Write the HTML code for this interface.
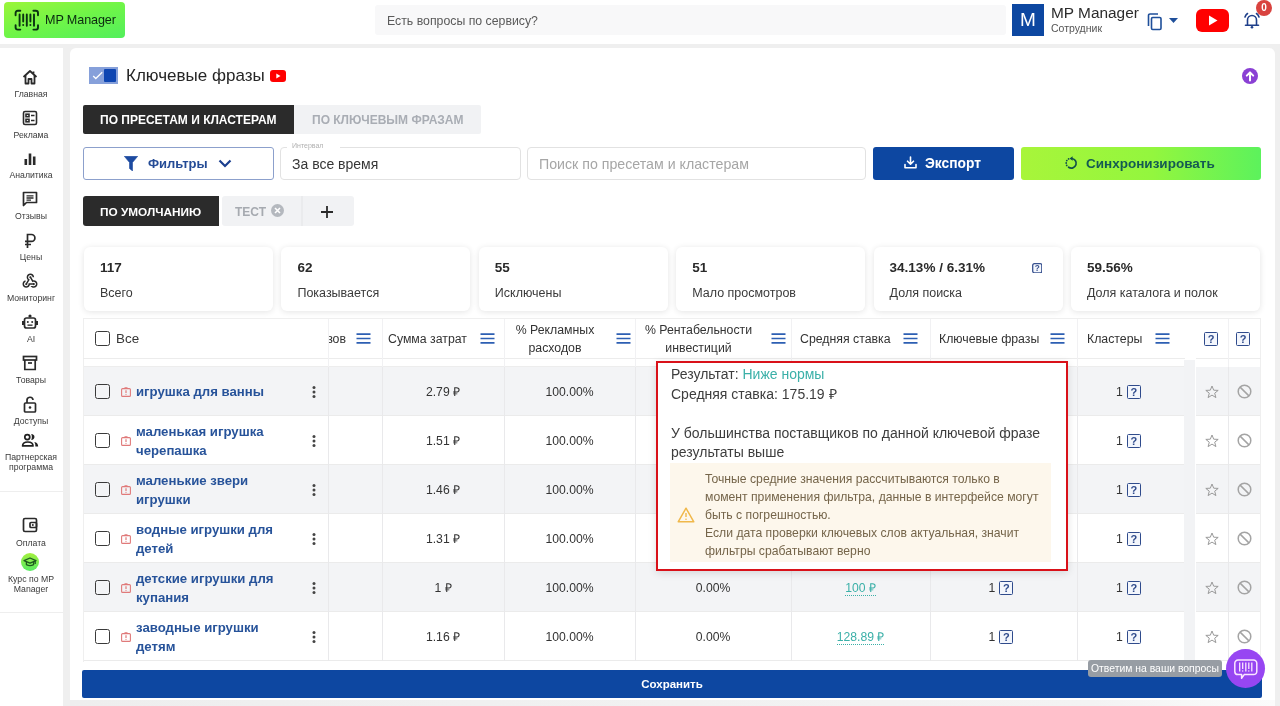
<!DOCTYPE html>
<html><head><meta charset="utf-8">
<style>
*{box-sizing:border-box;margin:0;padding:0}
html,body{width:1280px;height:706px;overflow:hidden;-webkit-font-smoothing:antialiased;background:#efefef;font-family:"Liberation Sans",sans-serif;color:#2c2c2c}
.a{position:absolute}
.hdr{left:0;top:0;width:1280px;height:44px;background:#fff}
.logo{left:4px;top:2px;width:121px;height:36px;border-radius:4px;background:linear-gradient(165deg,#9cf53a 0%,#6ff548 50%,#52ef5c 100%);}
.side{left:0;top:48px;width:63px;height:658px;background:#fff}
.card{left:70px;top:48px;width:1205px;height:670px;background:#fff;border-radius:6px}
.lbl{font-size:8.7px;color:#3a3a3a;text-align:center;width:62px;left:0;line-height:10px}
.ico{left:22px;width:16px;height:16px}
.ico svg{display:block}
.cb{width:15px;height:15px;border:1.8px solid #3a3a3a;border-radius:2.5px}
.lnk{font-size:13.2px;font-weight:700;color:#27539a;line-height:19px;white-space:nowrap}
.ctr{text-align:center;font-size:12.2px;color:#333;line-height:16px}
.hd{font-size:12.3px;color:#333;line-height:16px;white-space:nowrap}
.q{display:inline-flex;align-items:center;justify-content:center;width:14px;height:14px;border:1.9px solid #2f4b8c;background:#f3f6fc;color:#2f4b8c;font-size:11px;font-weight:700;line-height:10px;border-radius:1.5px;margin-left:4px;vertical-align:middle}
.ctr .q{position:relative;top:0px}
.ctr.g{padding-right:5px}
.tl{color:#3bb0a8;border-bottom:1px dotted #3bb0a8}
</style></head><body><div style="position:absolute;left:0;top:0;width:1280px;height:706px;will-change:transform">
<!-- header -->
<div class="a hdr"></div>
<div class="a logo"></div>
<svg class="a" style="left:14px;top:9px" width="26" height="23" viewBox="0 0 26 23">
 <g fill="none" stroke="#0a3312" stroke-width="1.9" stroke-linecap="round">
  <path d="M6.3 1.8H3.8Q1.6 1.8 1.6 4V6.2"/><path d="M6.3 20.6H3.8Q1.6 20.6 1.6 18.4V16.2"/>
  <path d="M19.4 1.8H21.8Q24 1.8 24 4V6.2"/><path d="M19.4 20.6H21.8Q24 20.6 24 18.4V16.2"/>
  <path d="M5.6 5.4V16.8M12.8 5.4V16.8M20 5.4V16.8M9.2 5.4V12.6M16.4 5.4V12.6"/>
 </g>
 <g fill="#0a3312"><circle cx="9.2" cy="15.9" r="1"/><circle cx="16.4" cy="15.9" r="1"/></g>
</svg>
<div class="a" style="left:45px;top:13px;font-size:12.6px;color:#0b2a10;letter-spacing:-0.1px">MP Manager</div>

<div class="a" style="left:375px;top:5px;width:631px;height:30px;background:#f8f8f9;border-radius:3px"></div>
<div class="a" style="left:387px;top:14px;font-size:12.3px;color:#5a5a5a">Есть вопросы по сервису?</div>

<div class="a" style="left:1012px;top:4px;width:32px;height:32px;background:#0d47a1;color:#fff;font-size:19px;text-align:center;line-height:32px">M</div>
<div class="a" style="left:1051px;top:4px;font-size:15.4px;color:#2c2c2c">MP Manager</div>
<div class="a" style="left:1051px;top:22px;font-size:10.5px;color:#555">Сотрудник</div>
<svg class="a" style="left:1147px;top:13px" width="16" height="18" viewBox="0 0 16 18"><g fill="none" stroke="#1f4f9a" stroke-width="1.6"><path d="M1.5 13V2.5A1.5 1.5 0 0 1 3 1H11"/><rect x="4.5" y="4.5" width="9.5" height="12" rx="1.2"/></g></svg>
<svg class="a" style="left:1169px;top:18px" width="9" height="5" viewBox="0 0 9 5"><path d="M0 0H9L4.5 5Z" fill="#1f4f9a"/></svg>
<svg class="a" style="left:1196px;top:9px" width="33" height="23" viewBox="0 0 33 23"><rect width="33" height="23" rx="6" fill="#f00"/><path d="M13 6.5V16.5L21.5 11.5Z" fill="#fff"/></svg>
<svg class="a" style="left:1243px;top:11px" width="18" height="18" viewBox="0 0 18 18"><g fill="none" stroke="#1f3f8a" stroke-width="1.6" stroke-linecap="round"><path d="M4.5 14V9A4.5 4.5 0 0 1 13.5 9V14"/><path d="M2.5 14.2H15.5"/><path d="M2 6A7 7 0 0 1 4.5 2.5M16 6A7 7 0 0 0 13.5 2.5"/></g><circle cx="9" cy="16.2" r="1.3" fill="#1f3f8a"/></svg>
<div class="a" style="left:1256px;top:0px;width:16px;height:16px;border-radius:50%;background:#d9433f;color:#fff;font-size:10px;font-weight:700;text-align:center;line-height:15px">0</div>

<!-- sidebar -->
<div class="a side"></div>
<div class="a" style="left:0;top:491px;width:63px;height:1px;background:#eee"></div>
<div class="a" style="left:0;top:612px;width:63px;height:1px;background:#eee"></div>
<!-- home -->
<svg class="a" style="left:22px;top:69px" width="16" height="16" viewBox="0 0 16 16"><g fill="none" stroke="#2a2a2a" stroke-width="1.8" stroke-linejoin="round"><path d="M1.5 8L8 2L14.5 8"/><path d="M3.5 6.5V14.5H6.5V10H9.5V14.5H12.5V6.5"/><path d="M11.5 2.5V4.5"/></g></svg>
<div class="a lbl" style="top:89px">Главная</div>
<!-- reklama -->
<svg class="a" style="left:22px;top:110px" width="16" height="16" viewBox="0 0 16 16"><g fill="none" stroke="#2a2a2a" stroke-width="1.6"><rect x="1.5" y="1.5" width="13" height="13" rx="1.5"/><rect x="4" y="4.2" width="3" height="2.5"/><rect x="4" y="9.3" width="3" height="2.5"/></g><path d="M9 5.5H12.5M9 10.5H12.5" stroke="#2a2a2a" stroke-width="1.5"/></svg>
<div class="a lbl" style="top:130px">Реклама</div>
<!-- analytics -->
<svg class="a" style="left:22px;top:151px" width="16" height="16" viewBox="0 0 16 16"><g fill="#2a2a2a"><rect x="2.5" y="8" width="2.6" height="6"/><rect x="6.7" y="2.5" width="2.6" height="11.5"/><rect x="10.9" y="5.5" width="2.6" height="8.5"/></g></svg>
<div class="a lbl" style="top:170px">Аналитика</div>
<!-- reviews -->
<svg class="a" style="left:22px;top:191px" width="16" height="17" viewBox="0 0 16 17"><g fill="none" stroke="#2a2a2a" stroke-width="1.7" stroke-linejoin="round"><path d="M1.5 1.5H14.5V11.5H4.5L1.5 14.5Z"/></g><path d="M4.5 4.8H11.5M4.5 7H11.5M4.5 9.2H9" stroke="#2a2a2a" stroke-width="1.3"/></svg>
<div class="a lbl" style="top:211px">Отзывы</div>
<!-- prices -->
<svg class="a" style="left:22px;top:233px" width="16" height="16" viewBox="0 0 16 16"><g fill="none" stroke="#2a2a2a" stroke-width="1.7"><path d="M5.5 15V1.5H9.5A3.3 3.3 0 0 1 9.5 8.3H3M3 11.5H9"/></g></svg>
<div class="a lbl" style="top:252px">Цены</div>
<!-- monitoring -->
<svg class="a" style="left:21px;top:272px" width="18" height="18" viewBox="0 0 24 24"><path fill="#2a2a2a" d="M10 15h5.88c.27-.31.67-.5 1.12-.5.83 0 1.5.67 1.5 1.5s-.67 1.5-1.5 1.5c-.44 0-.84-.19-1.12-.5H11.9c-.46 2.28-2.48 4-4.9 4-2.76 0-5-2.24-5-5 0-2.42 1.72-4.44 4-4.9v2.07c-1.16.41-2 1.53-2 2.83 0 1.650 1.35 3 3 3s3-1.35 3-3v-1zm2.5-11c1.65 0 3 1.35 3 3h2c0-2.76-2.24-5-5-5s-5 2.24-5 5c0 1.43.6 2.71 1.55 3.62l-2.350 3.9c-.68.14-1.2.75-1.2 1.48 0 .83.67 1.5 1.5 1.5s1.5-.67 1.5-1.5c0-.16-.02-.31-.07-.45l3.38-5.63C10.49 9.61 9.5 8.42 9.5 7c0-1.65 1.35-3 3-3zm4.5 9c-.64 0-1.23.2-1.72.54l-3.05-5.07C11.53 8.350 11 7.74 11 7c0-.83.67-1.5 1.5-1.5S14 6.17 14 7c0 .15-.02.29-.06.43l2.19 3.65c.28-.05.57-.08.87-.08 2.76 0 5 2.24 5 5s-2.24 5-5 5c-1.85 0-3.47-1.01-4.33-2.5h2.67c.48.32 1.05.5 1.66.5 1.65 0 3-1.35 3-3s-1.35-3-3-3z"/></svg>
<div class="a lbl" style="top:293px">Мониторинг</div>
<!-- AI -->
<svg class="a" style="left:22px;top:314px" width="16" height="16" viewBox="0 0 16 16"><g fill="none" stroke="#2a2a2a" stroke-width="1.7"><rect x="2.5" y="4" width="11" height="10" rx="2"/></g><g fill="#2a2a2a"><circle cx="8" cy="2" r="1.6"/><rect x="0" y="7" width="2" height="4"/><rect x="14" y="7" width="2" height="4"/><circle cx="5.8" cy="8" r="1"/><circle cx="10.2" cy="8" r="1"/><rect x="5.5" y="10.5" width="5" height="1.3"/></g></svg>
<div class="a lbl" style="top:334px">AI</div>
<!-- goods -->
<svg class="a" style="left:22px;top:355px" width="16" height="16" viewBox="0 0 16 16"><g fill="none" stroke="#2a2a2a" stroke-width="1.7"><rect x="1.5" y="1.5" width="13" height="3.5"/><path d="M2.8 5V14.5H13.2V5"/><path d="M6 8H10"/></g></svg>
<div class="a lbl" style="top:375px">Товары</div>
<!-- access -->
<svg class="a" style="left:22px;top:396px" width="16" height="17" viewBox="0 0 16 17"><g fill="none" stroke="#2a2a2a" stroke-width="1.7"><rect x="2.5" y="7" width="11" height="9" rx="1"/><path d="M5 7V4.5A3 3 0 0 1 11 4"/></g><circle cx="8" cy="11.5" r="1.3" fill="#2a2a2a"/></svg>
<div class="a lbl" style="top:416px">Доступы</div>
<!-- partner -->
<svg class="a" style="left:15px;top:425px" width="30" height="30" viewBox="0 0 30 30"><circle cx="12.3" cy="12.1" r="2.5" fill="none" stroke="#222" stroke-width="1.7"/><path d="M16.2 9.1C20.6 9.1 20.6 15 16.2 15C17.1 13 17.1 11.1 16.2 9.1Z" fill="#222"/><path d="M7.6 20.9Q7.6 17 12.8 17Q18 17 18 20.9Z" fill="none" stroke="#222" stroke-width="1.7" stroke-linejoin="round"/><path d="M19.3 16.9Q23.2 17.6 23.2 21.6H20.4Q20.6 18.6 19.3 16.9Z" fill="#222"/></svg>
<div class="a lbl" style="top:452px">Партнерская<br>программа</div>
<!-- payment -->
<svg class="a" style="left:22px;top:517px" width="16" height="16" viewBox="0 0 16 16"><g fill="none" stroke="#2a2a2a" stroke-width="1.7"><rect x="1.5" y="1.5" width="13" height="13" rx="1.5"/><rect x="8" y="5.5" width="6.5" height="5" rx="1"/></g><circle cx="10.8" cy="8" r="1" fill="#2a2a2a"/></svg>
<div class="a lbl" style="top:538px">Оплата</div>
<!-- course -->
<div class="a" style="left:21px;top:553px;width:18px;height:18px;border-radius:50%;background:linear-gradient(180deg,#a4ef3e,#58ec64)"></div>
<svg class="a" style="left:23px;top:557px" width="14" height="10" viewBox="0 0 14 10"><g fill="none" stroke="#1d5a1f" stroke-width="1.3" stroke-linejoin="round"><path d="M1 3.6L7 1L13 3.6L7 6.2Z"/><path d="M3.4 4.8V7.6Q7 9.6 10.6 7.6V4.8"/><path d="M12.2 3.9V7"/></g></svg>
<div class="a lbl" style="top:574px">Курс по MP<br>Manager</div>

<!-- main card -->
<div class="a card"></div>
<!-- title -->
<div class="a" style="left:89px;top:67px;width:29px;height:16.5px;background:#86a0da"></div>
<div class="a" style="left:103.5px;top:69px;width:12.5px;height:12.5px;background:#0f46b2;border-radius:1px"></div>
<svg class="a" style="left:92px;top:71px" width="11" height="9" viewBox="0 0 11 9"><path d="M1.2 5L3.8 7.5L10.2 1.2" fill="none" stroke="#fff" stroke-width="1.3"/></svg>
<div class="a" style="left:126px;top:66px;font-size:17px;color:#262626">Ключевые фразы</div>
<svg class="a" style="left:270px;top:70px" width="16" height="12" viewBox="0 0 16 12"><rect width="16" height="12" rx="3" fill="#f00"/><path d="M6.3 3.5V8.5L10.5 6Z" fill="#fff"/></svg>
<svg class="a" style="left:1242px;top:68px" width="16" height="16" viewBox="0 0 16 16"><circle cx="8" cy="8" r="8" fill="#8a40d4"/><path d="M8 12.5V4.5M4.8 7.6L8 4.4L11.2 7.6" fill="none" stroke="#fff" stroke-width="2" stroke-linecap="round" stroke-linejoin="round"/></svg>
<!-- mode tabs -->
<div class="a" style="left:83px;top:105px;width:211px;height:29px;background:#2b2b2b;border-radius:2px 0 0 2px"></div>
<div class="a" style="left:294px;top:105px;width:187px;height:29px;background:#f1f2f4;border-radius:0 2px 2px 0"></div>
<div class="a" style="left:100px;top:113px;font-size:12px;font-weight:700;color:#fff">ПО ПРЕСЕТАМ И КЛАСТЕРАМ</div>
<div class="a" style="left:312px;top:113px;font-size:12px;font-weight:700;color:#a9adb4">ПО КЛЮЧЕВЫМ ФРАЗАМ</div>
<!-- filter row -->
<div class="a" style="left:83px;top:147px;width:191px;height:33px;border:1px solid #8ca0cc;border-radius:3px"></div>
<svg class="a" style="left:124px;top:156px" width="14" height="15" viewBox="0 0 14 15"><path d="M0.3 0.3H13.7L8.5 6.5V15L5.5 12.5V6.5Z" fill="#1c4aa0" stroke="#1c4aa0" stroke-width="0.6" stroke-linejoin="round"/></svg>
<div class="a" style="left:148px;top:156px;font-size:13px;font-weight:700;color:#244b96">Фильтры</div>
<svg class="a" style="left:218px;top:159px" width="14" height="9" viewBox="0 0 14 9"><path d="M1.5 1.5L7 7L12.5 1.5" fill="none" stroke="#1a3f8f" stroke-width="2.2"/></svg>
<div class="a" style="left:280px;top:147px;width:241px;height:33px;border:1px solid #e2e2e2;border-radius:4px"></div>
<div class="a" style="left:287px;top:141px;padding:0 17px 0 5px;background:#fff;font-size:7px;color:#b0b0b0;line-height:9px">Интервал</div>
<div class="a" style="left:292px;top:156px;font-size:14px;color:#363636">За все время</div>
<div class="a" style="left:527px;top:147px;width:339px;height:33px;border:1px solid #e2e2e2;border-radius:4px"></div>
<div class="a" style="left:539px;top:156px;font-size:14.2px;color:#a6a6a6">Поиск по пресетам и кластерам</div>
<div class="a" style="left:873px;top:147px;width:141px;height:33px;background:#0d47a1;border-radius:3px"></div>
<svg class="a" style="left:904px;top:156px" width="13" height="13" viewBox="0 0 13 13"><g fill="none" stroke="#fff" stroke-width="1.6" stroke-linecap="round" stroke-linejoin="round"><path d="M6.5 1V8M3.5 5.2L6.5 8.2L9.5 5.2"/><path d="M1 8.5V11.8H12V8.5"/></g></svg>
<div class="a" style="left:925px;top:156px;font-size:13.8px;font-weight:700;color:#fff">Экспорт</div>
<div class="a" style="left:1021px;top:147px;width:240px;height:33px;background:linear-gradient(90deg,#a8f53a 0%,#93f63e 55%,#5cf25c 100%);border-radius:3px"></div>
<svg class="a" style="left:1064px;top:156px" width="14" height="14" viewBox="0 0 14 14"><path d="M7.5 2.5A4.8 4.8 0 1 1 4.6 11.2" fill="none" stroke="#11504a" stroke-width="1.7" stroke-linecap="round"/><g fill="#11504a"><circle cx="2.7" cy="9.4" r="0.9"/><circle cx="2.2" cy="7" r="0.9"/><circle cx="2.8" cy="4.6" r="0.9"/><circle cx="4.6" cy="2.9" r="0.9"/></g><path d="M8.6 0.2L5.6 2.5L8.6 4.8Z" fill="#11504a"/></svg>
<div class="a" style="left:1086px;top:156px;font-size:13.5px;font-weight:700;color:#145a52">Синхронизировать</div>
<!-- preset tabs -->
<div class="a" style="left:83px;top:196px;width:136px;height:30px;background:#2b2b2b;border-radius:3px 0 0 3px"></div>
<div class="a" style="left:222px;top:196px;width:79px;height:30px;background:#f1f2f4;border-radius:3px 0 0 3px"></div>
<div class="a" style="left:301px;top:196px;width:2px;height:30px;background:#eaebed"></div>
<div class="a" style="left:303px;top:196px;width:51px;height:30px;background:#f1f2f4;border-radius:0 3px 3px 0"></div>
<div class="a" style="left:100px;top:205px;font-size:11.8px;font-weight:700;color:#fff">ПО УМОЛЧАНИЮ</div>
<div class="a" style="left:235px;top:205px;font-size:12px;font-weight:700;color:#a6aab0">ТЕСТ</div>
<svg class="a" style="left:271px;top:204px" width="13" height="13" viewBox="0 0 13 13"><circle cx="6.5" cy="6.5" r="6.5" fill="#b4b8be"/><path d="M4 4L9 9M9 4L4 9" stroke="#fff" stroke-width="1.6"/></svg>
<svg class="a" style="left:321px;top:205.5px" width="12" height="12" viewBox="0 0 12 12"><path d="M6 0V12M0 6H12" stroke="#2a2a2a" stroke-width="1.8"/></svg>
<!-- stat cards -->
<div class="a" style="left:84.0px;top:247px;width:189px;height:64px;background:#fff;border-radius:6px;box-shadow:0 1px 6px rgba(0,0,0,0.11)"></div>
<div class="a" style="left:100.0px;top:260px;font-size:13.5px;font-weight:700;color:#2a2a2a">117</div>
<div class="a" style="left:100.0px;top:286px;font-size:12.5px;color:#3a3a3a">Всего</div>
<div class="a" style="left:281.4px;top:247px;width:189px;height:64px;background:#fff;border-radius:6px;box-shadow:0 1px 6px rgba(0,0,0,0.11)"></div>
<div class="a" style="left:297.4px;top:260px;font-size:13.5px;font-weight:700;color:#2a2a2a">62</div>
<div class="a" style="left:297.4px;top:286px;font-size:12.5px;color:#3a3a3a">Показывается</div>
<div class="a" style="left:478.8px;top:247px;width:189px;height:64px;background:#fff;border-radius:6px;box-shadow:0 1px 6px rgba(0,0,0,0.11)"></div>
<div class="a" style="left:494.8px;top:260px;font-size:13.5px;font-weight:700;color:#2a2a2a">55</div>
<div class="a" style="left:494.8px;top:286px;font-size:12.5px;color:#3a3a3a">Исключены</div>
<div class="a" style="left:676.2px;top:247px;width:189px;height:64px;background:#fff;border-radius:6px;box-shadow:0 1px 6px rgba(0,0,0,0.11)"></div>
<div class="a" style="left:692.2px;top:260px;font-size:13.5px;font-weight:700;color:#2a2a2a">51</div>
<div class="a" style="left:692.2px;top:286px;font-size:12.5px;color:#3a3a3a">Мало просмотров</div>
<div class="a" style="left:873.6px;top:247px;width:189px;height:64px;background:#fff;border-radius:6px;box-shadow:0 1px 6px rgba(0,0,0,0.11)"></div>
<div class="a" style="left:889.6px;top:260px;font-size:13.5px;font-weight:700;color:#2a2a2a">34.13% / 6.31%</div>
<div class="a" style="left:889.6px;top:286px;font-size:12.5px;color:#3a3a3a">Доля поиска</div>
<div class="a" style="left:1071.0px;top:247px;width:189px;height:64px;background:#fff;border-radius:6px;box-shadow:0 1px 6px rgba(0,0,0,0.11)"></div>
<div class="a" style="left:1087.0px;top:260px;font-size:13.5px;font-weight:700;color:#2a2a2a">59.56%</div>
<div class="a" style="left:1087.0px;top:286px;font-size:12.5px;color:#3a3a3a">Доля каталога и полок</div>
<svg class="a" style="left:1031.5px;top:262.5px" width="10.5" height="10.5" viewBox="0 0 10.5 10.5"><rect x="0.7" y="0.7" width="9.1" height="9.1" rx="1.6" fill="#f4f7fd" stroke="#3a5390" stroke-width="1.3"/><text x="5.25" y="8.4" font-size="8.2" font-weight="700" text-anchor="middle" fill="#3a5390" font-family="Liberation Sans">?</text></svg>

<!-- table -->
<div class="a" style="left:83px;top:318px;width:1178px;height:344px;background:#fff;border:1px solid #efefef;border-bottom:none"></div>
<div class="a" style="left:83px;top:358px;width:1102px;height:1px;background:#ececec"></div>
<div class="a" style="left:1196px;top:358px;width:65px;height:1px;background:#ececec"></div>
<div class="a" style="left:84px;top:367px;width:1101px;height:49px;background:#f3f4f6;border-bottom:1px solid #ebebeb"></div>
<div class="a" style="left:1196px;top:367px;width:64px;height:49px;background:#f3f4f6;border-bottom:1px solid #ebebeb"></div>
<div class="a cb" style="left:95px;top:384.0px"></div>
<svg class="a" style="left:121px;top:386.5px" width="10" height="10" viewBox="0 0 10 10"><rect x="0.6" y="1.6" width="8.8" height="7.8" rx="1" fill="none" stroke="#e07a7a" stroke-width="1.1"/><path d="M3.5 0.8H6.5" stroke="#e07a7a" stroke-width="1.1"/><path d="M5 3.3V5.9" stroke="#e07a7a" stroke-width="1.2"/><circle cx="5" cy="7.3" r="0.6" fill="#e07a7a"/></svg>
<div class="a lnk" style="left:136px;top:382.0px">игрушка для ванны</div>
<svg class="a" style="left:312px;top:385.5px" width="4" height="12" viewBox="0 0 4 12"><g fill="#444"><circle cx="2" cy="1.6" r="1.5"/><circle cx="2" cy="6" r="1.5"/><circle cx="2" cy="10.4" r="1.5"/></g></svg>
<div class="a" style="left:328px;top:367px;width:1px;height:49px;background:#e9e9eb"></div>
<div class="a" style="left:382px;top:367px;width:1px;height:49px;background:#e9e9eb"></div>
<div class="a" style="left:504px;top:367px;width:1px;height:49px;background:#e9e9eb"></div>
<div class="a" style="left:635px;top:367px;width:1px;height:49px;background:#e9e9eb"></div>
<div class="a" style="left:791px;top:367px;width:1px;height:49px;background:#e9e9eb"></div>
<div class="a" style="left:930px;top:367px;width:1px;height:49px;background:#e9e9eb"></div>
<div class="a" style="left:1077px;top:367px;width:1px;height:49px;background:#e9e9eb"></div>
<div class="a" style="left:1228px;top:367px;width:1px;height:49px;background:#e9e9eb"></div>
<div class="a ctr" style="left:382px;width:122px;top:383.5px">2.79 ₽</div>
<div class="a ctr" style="left:504px;width:131px;top:383.5px">100.00%</div>
<div class="a ctr g" style="left:1077px;width:108px;top:383.5px">1<span class="q">?</span></div>
<svg class="a" style="left:1205px;top:384.5px" width="14" height="14" viewBox="0 0 14 14"><path d="M7 1L8.7 5.2L13.2 5.4L9.7 8.2L10.9 12.6L7 10.1L3.1 12.6L4.3 8.2L0.8 5.4L5.3 5.2Z" fill="none" stroke="#9a9a9a" stroke-width="1"/></svg>
<svg class="a" style="left:1237px;top:384.0px" width="15" height="15" viewBox="0 0 15 15"><circle cx="7.5" cy="7.5" r="6.3" fill="none" stroke="#a4a4a4" stroke-width="1.5"/><path d="M3.1 3.1L11.9 11.9" stroke="#a4a4a4" stroke-width="1.5"/></svg>
<div class="a" style="left:84px;top:416px;width:1101px;height:49px;background:#fff;border-bottom:1px solid #ebebeb"></div>
<div class="a" style="left:1196px;top:416px;width:64px;height:49px;background:#fff;border-bottom:1px solid #ebebeb"></div>
<div class="a cb" style="left:95px;top:433.0px"></div>
<svg class="a" style="left:121px;top:435.5px" width="10" height="10" viewBox="0 0 10 10"><rect x="0.6" y="1.6" width="8.8" height="7.8" rx="1" fill="none" stroke="#e07a7a" stroke-width="1.1"/><path d="M3.5 0.8H6.5" stroke="#e07a7a" stroke-width="1.1"/><path d="M5 3.3V5.9" stroke="#e07a7a" stroke-width="1.2"/><circle cx="5" cy="7.3" r="0.6" fill="#e07a7a"/></svg>
<div class="a lnk" style="left:136px;top:421.5px">маленькая игрушка<br>черепашка</div>
<svg class="a" style="left:312px;top:434.5px" width="4" height="12" viewBox="0 0 4 12"><g fill="#444"><circle cx="2" cy="1.6" r="1.5"/><circle cx="2" cy="6" r="1.5"/><circle cx="2" cy="10.4" r="1.5"/></g></svg>
<div class="a" style="left:328px;top:416px;width:1px;height:49px;background:#e9e9eb"></div>
<div class="a" style="left:382px;top:416px;width:1px;height:49px;background:#e9e9eb"></div>
<div class="a" style="left:504px;top:416px;width:1px;height:49px;background:#e9e9eb"></div>
<div class="a" style="left:635px;top:416px;width:1px;height:49px;background:#e9e9eb"></div>
<div class="a" style="left:791px;top:416px;width:1px;height:49px;background:#e9e9eb"></div>
<div class="a" style="left:930px;top:416px;width:1px;height:49px;background:#e9e9eb"></div>
<div class="a" style="left:1077px;top:416px;width:1px;height:49px;background:#e9e9eb"></div>
<div class="a" style="left:1228px;top:416px;width:1px;height:49px;background:#e9e9eb"></div>
<div class="a ctr" style="left:382px;width:122px;top:432.5px">1.51 ₽</div>
<div class="a ctr" style="left:504px;width:131px;top:432.5px">100.00%</div>
<div class="a ctr g" style="left:1077px;width:108px;top:432.5px">1<span class="q">?</span></div>
<svg class="a" style="left:1205px;top:433.5px" width="14" height="14" viewBox="0 0 14 14"><path d="M7 1L8.7 5.2L13.2 5.4L9.7 8.2L10.9 12.6L7 10.1L3.1 12.6L4.3 8.2L0.8 5.4L5.3 5.2Z" fill="none" stroke="#9a9a9a" stroke-width="1"/></svg>
<svg class="a" style="left:1237px;top:433.0px" width="15" height="15" viewBox="0 0 15 15"><circle cx="7.5" cy="7.5" r="6.3" fill="none" stroke="#a4a4a4" stroke-width="1.5"/><path d="M3.1 3.1L11.9 11.9" stroke="#a4a4a4" stroke-width="1.5"/></svg>
<div class="a" style="left:84px;top:465px;width:1101px;height:49px;background:#f3f4f6;border-bottom:1px solid #ebebeb"></div>
<div class="a" style="left:1196px;top:465px;width:64px;height:49px;background:#f3f4f6;border-bottom:1px solid #ebebeb"></div>
<div class="a cb" style="left:95px;top:482.0px"></div>
<svg class="a" style="left:121px;top:484.5px" width="10" height="10" viewBox="0 0 10 10"><rect x="0.6" y="1.6" width="8.8" height="7.8" rx="1" fill="none" stroke="#e07a7a" stroke-width="1.1"/><path d="M3.5 0.8H6.5" stroke="#e07a7a" stroke-width="1.1"/><path d="M5 3.3V5.9" stroke="#e07a7a" stroke-width="1.2"/><circle cx="5" cy="7.3" r="0.6" fill="#e07a7a"/></svg>
<div class="a lnk" style="left:136px;top:470.5px">маленькие звери<br>игрушки</div>
<svg class="a" style="left:312px;top:483.5px" width="4" height="12" viewBox="0 0 4 12"><g fill="#444"><circle cx="2" cy="1.6" r="1.5"/><circle cx="2" cy="6" r="1.5"/><circle cx="2" cy="10.4" r="1.5"/></g></svg>
<div class="a" style="left:328px;top:465px;width:1px;height:49px;background:#e9e9eb"></div>
<div class="a" style="left:382px;top:465px;width:1px;height:49px;background:#e9e9eb"></div>
<div class="a" style="left:504px;top:465px;width:1px;height:49px;background:#e9e9eb"></div>
<div class="a" style="left:635px;top:465px;width:1px;height:49px;background:#e9e9eb"></div>
<div class="a" style="left:791px;top:465px;width:1px;height:49px;background:#e9e9eb"></div>
<div class="a" style="left:930px;top:465px;width:1px;height:49px;background:#e9e9eb"></div>
<div class="a" style="left:1077px;top:465px;width:1px;height:49px;background:#e9e9eb"></div>
<div class="a" style="left:1228px;top:465px;width:1px;height:49px;background:#e9e9eb"></div>
<div class="a ctr" style="left:382px;width:122px;top:481.5px">1.46 ₽</div>
<div class="a ctr" style="left:504px;width:131px;top:481.5px">100.00%</div>
<div class="a ctr g" style="left:1077px;width:108px;top:481.5px">1<span class="q">?</span></div>
<svg class="a" style="left:1205px;top:482.5px" width="14" height="14" viewBox="0 0 14 14"><path d="M7 1L8.7 5.2L13.2 5.4L9.7 8.2L10.9 12.6L7 10.1L3.1 12.6L4.3 8.2L0.8 5.4L5.3 5.2Z" fill="none" stroke="#9a9a9a" stroke-width="1"/></svg>
<svg class="a" style="left:1237px;top:482.0px" width="15" height="15" viewBox="0 0 15 15"><circle cx="7.5" cy="7.5" r="6.3" fill="none" stroke="#a4a4a4" stroke-width="1.5"/><path d="M3.1 3.1L11.9 11.9" stroke="#a4a4a4" stroke-width="1.5"/></svg>
<div class="a" style="left:84px;top:514px;width:1101px;height:49px;background:#fff;border-bottom:1px solid #ebebeb"></div>
<div class="a" style="left:1196px;top:514px;width:64px;height:49px;background:#fff;border-bottom:1px solid #ebebeb"></div>
<div class="a cb" style="left:95px;top:531.0px"></div>
<svg class="a" style="left:121px;top:533.5px" width="10" height="10" viewBox="0 0 10 10"><rect x="0.6" y="1.6" width="8.8" height="7.8" rx="1" fill="none" stroke="#e07a7a" stroke-width="1.1"/><path d="M3.5 0.8H6.5" stroke="#e07a7a" stroke-width="1.1"/><path d="M5 3.3V5.9" stroke="#e07a7a" stroke-width="1.2"/><circle cx="5" cy="7.3" r="0.6" fill="#e07a7a"/></svg>
<div class="a lnk" style="left:136px;top:519.5px">водные игрушки для<br>детей</div>
<svg class="a" style="left:312px;top:532.5px" width="4" height="12" viewBox="0 0 4 12"><g fill="#444"><circle cx="2" cy="1.6" r="1.5"/><circle cx="2" cy="6" r="1.5"/><circle cx="2" cy="10.4" r="1.5"/></g></svg>
<div class="a" style="left:328px;top:514px;width:1px;height:49px;background:#e9e9eb"></div>
<div class="a" style="left:382px;top:514px;width:1px;height:49px;background:#e9e9eb"></div>
<div class="a" style="left:504px;top:514px;width:1px;height:49px;background:#e9e9eb"></div>
<div class="a" style="left:635px;top:514px;width:1px;height:49px;background:#e9e9eb"></div>
<div class="a" style="left:791px;top:514px;width:1px;height:49px;background:#e9e9eb"></div>
<div class="a" style="left:930px;top:514px;width:1px;height:49px;background:#e9e9eb"></div>
<div class="a" style="left:1077px;top:514px;width:1px;height:49px;background:#e9e9eb"></div>
<div class="a" style="left:1228px;top:514px;width:1px;height:49px;background:#e9e9eb"></div>
<div class="a ctr" style="left:382px;width:122px;top:530.5px">1.31 ₽</div>
<div class="a ctr" style="left:504px;width:131px;top:530.5px">100.00%</div>
<div class="a ctr g" style="left:1077px;width:108px;top:530.5px">1<span class="q">?</span></div>
<svg class="a" style="left:1205px;top:531.5px" width="14" height="14" viewBox="0 0 14 14"><path d="M7 1L8.7 5.2L13.2 5.4L9.7 8.2L10.9 12.6L7 10.1L3.1 12.6L4.3 8.2L0.8 5.4L5.3 5.2Z" fill="none" stroke="#9a9a9a" stroke-width="1"/></svg>
<svg class="a" style="left:1237px;top:531.0px" width="15" height="15" viewBox="0 0 15 15"><circle cx="7.5" cy="7.5" r="6.3" fill="none" stroke="#a4a4a4" stroke-width="1.5"/><path d="M3.1 3.1L11.9 11.9" stroke="#a4a4a4" stroke-width="1.5"/></svg>
<div class="a" style="left:84px;top:563px;width:1101px;height:49px;background:#f3f4f6;border-bottom:1px solid #ebebeb"></div>
<div class="a" style="left:1196px;top:563px;width:64px;height:49px;background:#f3f4f6;border-bottom:1px solid #ebebeb"></div>
<div class="a cb" style="left:95px;top:580.0px"></div>
<svg class="a" style="left:121px;top:582.5px" width="10" height="10" viewBox="0 0 10 10"><rect x="0.6" y="1.6" width="8.8" height="7.8" rx="1" fill="none" stroke="#e07a7a" stroke-width="1.1"/><path d="M3.5 0.8H6.5" stroke="#e07a7a" stroke-width="1.1"/><path d="M5 3.3V5.9" stroke="#e07a7a" stroke-width="1.2"/><circle cx="5" cy="7.3" r="0.6" fill="#e07a7a"/></svg>
<div class="a lnk" style="left:136px;top:568.5px">детские игрушки для<br>купания</div>
<svg class="a" style="left:312px;top:581.5px" width="4" height="12" viewBox="0 0 4 12"><g fill="#444"><circle cx="2" cy="1.6" r="1.5"/><circle cx="2" cy="6" r="1.5"/><circle cx="2" cy="10.4" r="1.5"/></g></svg>
<div class="a" style="left:328px;top:563px;width:1px;height:49px;background:#e9e9eb"></div>
<div class="a" style="left:382px;top:563px;width:1px;height:49px;background:#e9e9eb"></div>
<div class="a" style="left:504px;top:563px;width:1px;height:49px;background:#e9e9eb"></div>
<div class="a" style="left:635px;top:563px;width:1px;height:49px;background:#e9e9eb"></div>
<div class="a" style="left:791px;top:563px;width:1px;height:49px;background:#e9e9eb"></div>
<div class="a" style="left:930px;top:563px;width:1px;height:49px;background:#e9e9eb"></div>
<div class="a" style="left:1077px;top:563px;width:1px;height:49px;background:#e9e9eb"></div>
<div class="a" style="left:1228px;top:563px;width:1px;height:49px;background:#e9e9eb"></div>
<div class="a ctr" style="left:382px;width:122px;top:579.5px">1 ₽</div>
<div class="a ctr" style="left:504px;width:131px;top:579.5px">100.00%</div>
<div class="a ctr" style="left:635px;width:156px;top:579.5px">0.00%</div>
<div class="a ctr" style="left:791px;width:139px;top:579.5px"><span class="tl">100 ₽</span></div>
<div class="a ctr g" style="left:930px;width:147px;top:579.5px">1<span class="q">?</span></div>
<div class="a ctr g" style="left:1077px;width:108px;top:579.5px">1<span class="q">?</span></div>
<svg class="a" style="left:1205px;top:580.5px" width="14" height="14" viewBox="0 0 14 14"><path d="M7 1L8.7 5.2L13.2 5.4L9.7 8.2L10.9 12.6L7 10.1L3.1 12.6L4.3 8.2L0.8 5.4L5.3 5.2Z" fill="none" stroke="#9a9a9a" stroke-width="1"/></svg>
<svg class="a" style="left:1237px;top:580.0px" width="15" height="15" viewBox="0 0 15 15"><circle cx="7.5" cy="7.5" r="6.3" fill="none" stroke="#a4a4a4" stroke-width="1.5"/><path d="M3.1 3.1L11.9 11.9" stroke="#a4a4a4" stroke-width="1.5"/></svg>
<div class="a" style="left:84px;top:612px;width:1101px;height:49px;background:#fff;border-bottom:1px solid #ebebeb"></div>
<div class="a" style="left:1196px;top:612px;width:64px;height:49px;background:#fff;border-bottom:1px solid #ebebeb"></div>
<div class="a cb" style="left:95px;top:629.0px"></div>
<svg class="a" style="left:121px;top:631.5px" width="10" height="10" viewBox="0 0 10 10"><rect x="0.6" y="1.6" width="8.8" height="7.8" rx="1" fill="none" stroke="#e07a7a" stroke-width="1.1"/><path d="M3.5 0.8H6.5" stroke="#e07a7a" stroke-width="1.1"/><path d="M5 3.3V5.9" stroke="#e07a7a" stroke-width="1.2"/><circle cx="5" cy="7.3" r="0.6" fill="#e07a7a"/></svg>
<div class="a lnk" style="left:136px;top:617.5px">заводные игрушки<br>детям</div>
<svg class="a" style="left:312px;top:630.5px" width="4" height="12" viewBox="0 0 4 12"><g fill="#444"><circle cx="2" cy="1.6" r="1.5"/><circle cx="2" cy="6" r="1.5"/><circle cx="2" cy="10.4" r="1.5"/></g></svg>
<div class="a" style="left:328px;top:612px;width:1px;height:49px;background:#e9e9eb"></div>
<div class="a" style="left:382px;top:612px;width:1px;height:49px;background:#e9e9eb"></div>
<div class="a" style="left:504px;top:612px;width:1px;height:49px;background:#e9e9eb"></div>
<div class="a" style="left:635px;top:612px;width:1px;height:49px;background:#e9e9eb"></div>
<div class="a" style="left:791px;top:612px;width:1px;height:49px;background:#e9e9eb"></div>
<div class="a" style="left:930px;top:612px;width:1px;height:49px;background:#e9e9eb"></div>
<div class="a" style="left:1077px;top:612px;width:1px;height:49px;background:#e9e9eb"></div>
<div class="a" style="left:1228px;top:612px;width:1px;height:49px;background:#e9e9eb"></div>
<div class="a ctr" style="left:382px;width:122px;top:628.5px">1.16 ₽</div>
<div class="a ctr" style="left:504px;width:131px;top:628.5px">100.00%</div>
<div class="a ctr" style="left:635px;width:156px;top:628.5px">0.00%</div>
<div class="a ctr" style="left:791px;width:139px;top:628.5px"><span class="tl">128.89 ₽</span></div>
<div class="a ctr g" style="left:930px;width:147px;top:628.5px">1<span class="q">?</span></div>
<div class="a ctr g" style="left:1077px;width:108px;top:628.5px">1<span class="q">?</span></div>
<svg class="a" style="left:1205px;top:629.5px" width="14" height="14" viewBox="0 0 14 14"><path d="M7 1L8.7 5.2L13.2 5.4L9.7 8.2L10.9 12.6L7 10.1L3.1 12.6L4.3 8.2L0.8 5.4L5.3 5.2Z" fill="none" stroke="#9a9a9a" stroke-width="1"/></svg>
<svg class="a" style="left:1237px;top:629.0px" width="15" height="15" viewBox="0 0 15 15"><circle cx="7.5" cy="7.5" r="6.3" fill="none" stroke="#a4a4a4" stroke-width="1.5"/><path d="M3.1 3.1L11.9 11.9" stroke="#a4a4a4" stroke-width="1.5"/></svg>
<div class="a" style="left:84px;top:366px;width:1101px;height:1px;background:#ededed"></div>
<div class="a" style="left:328px;top:319px;width:1px;height:48px;background:#f1f1f3"></div>
<div class="a" style="left:382px;top:319px;width:1px;height:48px;background:#f1f1f3"></div>
<div class="a" style="left:504px;top:319px;width:1px;height:48px;background:#f1f1f3"></div>
<div class="a" style="left:635px;top:319px;width:1px;height:48px;background:#f1f1f3"></div>
<div class="a" style="left:791px;top:319px;width:1px;height:48px;background:#f1f1f3"></div>
<div class="a" style="left:930px;top:319px;width:1px;height:48px;background:#f1f1f3"></div>
<div class="a" style="left:1077px;top:319px;width:1px;height:48px;background:#f1f1f3"></div>
<div class="a" style="left:1228px;top:319px;width:1px;height:48px;background:#f1f1f3"></div>
<div class="a" style="left:1184px;top:360px;width:11px;height:302px;background:#f2f3f5"></div>
<div class="a cb" style="left:95px;top:331px"></div>
<div class="a" style="left:116px;top:331px;font-size:13.4px;color:#383838">Все</div>
<svg class="a" style="left:356px;top:333px" width="15" height="11" viewBox="0 0 15 11"><path d="M0.5 1.2H14.5M0.5 5.5H14.5M0.5 9.8H14.5" stroke="#2d5fb3" stroke-width="1.7"/></svg>
<svg class="a" style="left:480px;top:333px" width="15" height="11" viewBox="0 0 15 11"><path d="M0.5 1.2H14.5M0.5 5.5H14.5M0.5 9.8H14.5" stroke="#2d5fb3" stroke-width="1.7"/></svg>
<svg class="a" style="left:616px;top:333px" width="15" height="11" viewBox="0 0 15 11"><path d="M0.5 1.2H14.5M0.5 5.5H14.5M0.5 9.8H14.5" stroke="#2d5fb3" stroke-width="1.7"/></svg>
<svg class="a" style="left:771px;top:333px" width="15" height="11" viewBox="0 0 15 11"><path d="M0.5 1.2H14.5M0.5 5.5H14.5M0.5 9.8H14.5" stroke="#2d5fb3" stroke-width="1.7"/></svg>
<svg class="a" style="left:903px;top:333px" width="15" height="11" viewBox="0 0 15 11"><path d="M0.5 1.2H14.5M0.5 5.5H14.5M0.5 9.8H14.5" stroke="#2d5fb3" stroke-width="1.7"/></svg>
<svg class="a" style="left:1050px;top:333px" width="15" height="11" viewBox="0 0 15 11"><path d="M0.5 1.2H14.5M0.5 5.5H14.5M0.5 9.8H14.5" stroke="#2d5fb3" stroke-width="1.7"/></svg>
<svg class="a" style="left:1155px;top:333px" width="15" height="11" viewBox="0 0 15 11"><path d="M0.5 1.2H14.5M0.5 5.5H14.5M0.5 9.8H14.5" stroke="#2d5fb3" stroke-width="1.7"/></svg>
<div class="a hd" style="left:329px;top:331px;width:17px;height:16px;overflow:hidden"><span style="position:absolute;right:0;top:0">зов</span></div>
<div class="a hd" style="left:388px;top:331px">Сумма затрат</div>
<div class="a hd" style="left:505px;top:322px;width:100px;text-align:center;line-height:17.5px">% Рекламных<br>расходов</div>
<div class="a hd" style="left:643px;top:322px;width:111px;text-align:center;line-height:17.5px">% Рентабельности<br>инвестиций</div>
<div class="a hd" style="left:800px;top:331px">Средняя ставка</div>
<div class="a hd" style="left:939px;top:331px">Ключевые фразы</div>
<div class="a hd" style="left:1087px;top:331px">Кластеры</div>
<span class="a q" style="left:1204px;top:332px;margin:0">?</span>
<span class="a q" style="left:1236px;top:332px;margin:0">?</span>
<div class="a" style="left:82px;top:670px;width:1180px;height:28px;background:#0d47a1;border-radius:2px;color:#fff;font-size:11.5px;font-weight:700;text-align:center;line-height:28px">Сохранить</div>
<!-- /table -->
<div class="a" style="left:70px;top:700px;width:1205px;height:6px;background:linear-gradient(90deg,#eeeeee,#f3f3f3 85%,#fbfbfb)"></div>
<!-- tooltip -->
<div class="a" style="left:655.5px;top:360.5px;width:412px;height:210.5px;background:#fff;border:2.8px solid #d91119;box-shadow:0 2px 8px rgba(0,0,0,0.12)"></div>
<div class="a" style="left:671px;top:365px;font-size:14px;color:#3d3d3d;line-height:19.5px;white-space:nowrap">Результат: <span style="color:#3bb0a8">Ниже нормы</span><br>Средняя ставка: 175.19 ₽<br><br>У большинства поставщиков по данной ключевой фразе<br>результаты выше</div>
<div class="a" style="left:670px;top:463px;width:381px;height:99px;background:#fdf7ec"></div>
<svg class="a" style="left:677px;top:507px" width="18" height="16" viewBox="0 0 18 16"><path d="M9 1.2L16.8 14.8H1.2Z" fill="none" stroke="#f0b84a" stroke-width="1.5" stroke-linejoin="round"/><path d="M9 6V10" stroke="#f0b84a" stroke-width="1.4"/><circle cx="9" cy="12.2" r="0.8" fill="#f0b84a"/></svg>
<div class="a" style="left:705px;top:470px;font-size:12.2px;color:#75654a;line-height:18px;white-space:nowrap">Точные средние значения рассчитываются только в<br>момент применения фильтра, данные в интерфейсе могут<br>быть с погрешностью.<br>Если дата проверки ключевых слов актуальная, значит<br>фильтры срабатывают верно</div>
<!-- chat -->
<div class="a" style="left:1088px;top:660px;width:134px;height:17px;background:#979da4;border-radius:3px;color:#fff;font-size:10.4px;line-height:17px;text-align:center;white-space:nowrap">Ответим на ваши вопросы</div>
<div class="a" style="left:1226px;top:649px;width:39px;height:39px;border-radius:50%;background:#9746f2"></div>
<svg class="a" style="left:1234px;top:657px" width="24" height="24" viewBox="0 0 24 24"><path d="M4 3.1H19.6A3.2 3.2 0 0 1 22.8 6.3V14.4A3.2 3.2 0 0 1 19.6 17.6H10.2L7.6 21.3V17.6H4A3.2 3.2 0 0 1 0.8 14.4V6.3A3.2 3.2 0 0 1 4 3.1Z" fill="none" stroke="#fbe6ff" stroke-width="1.5" stroke-linejoin="round"/><path d="M5.7 5.6V14.6M11.8 5.6V14.6M17.8 5.6V14.6M8.7 5.6V12M14.8 5.6V12" stroke="#fbe6ff" stroke-width="1.3"/><circle cx="8.7" cy="14" r="0.7" fill="#fbe6ff"/><circle cx="14.8" cy="14" r="0.7" fill="#fbe6ff"/></svg>
</div></body></html>
